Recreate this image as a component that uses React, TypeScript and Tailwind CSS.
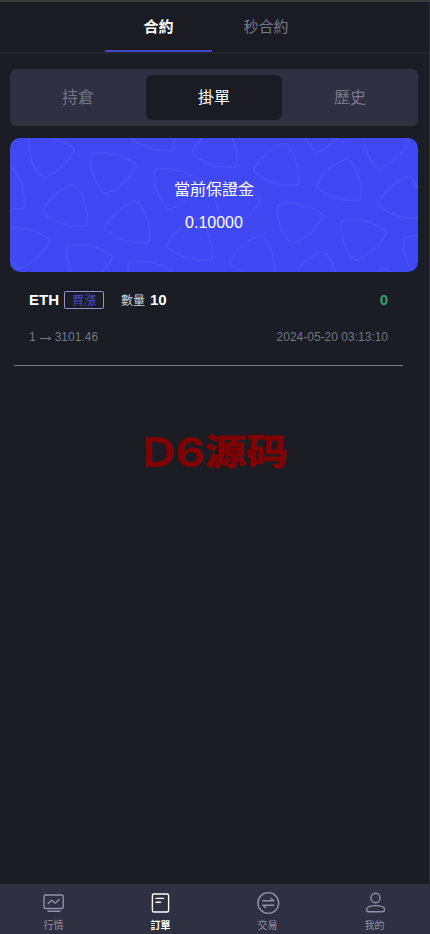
import React from "react";

// Corner positions of the outlined shapes, in thirds of a pixel on the card.
const pointingDown: [number, number][] = [
  [242, 48], [56, 0], [432, 96], [170, 323], [-18, 274], [355, 373],
  [615, 149], [803, 199], [993, 248], [1180, 298], [874, -77], [1061, -27],
];
const pointingUp: [number, number][] = [
  [98, 221], [285, 271], [472, 323], [-90, 169], [358, -6], [547, 44],
  [732, 98], [920, 144], [1105, 198], [660, 373], [847, 423], [1035, 473],
];

function CardPattern() {
  return (
    <svg className="absolute inset-0 h-full w-full" viewBox="0 0 1224 402" preserveAspectRatio="none" fill="none" stroke="#4850f6" strokeWidth="5" strokeLinejoin="round">
      {pointingDown.map(([x, y]) => (
        <path key={`d${x}`} transform={`translate(${x} ${y})`} d="M8-1Q76-12 132 28Q140 34 134 42Q106 92 52 117Q44 121 38 114Q-2 72 0 8Q0 0 8-1Z" />
      ))}
      {pointingUp.map(([x, y]) => (
        <path key={`u${x}`} transform={`translate(${x} ${y})`} d="M1-8Q34-60 86-80Q94-84 100-77Q136-34 134 34Q134 42 126 43Q54 48 3 6Q-3 0 1-8Z" />
      ))}
    </svg>
  );
}

function Watermark() {
  return (
    <svg className="pointer-events-none absolute left-[130px] top-[403px] h-[90px] w-[172px]" viewBox="0 0 172 90" fill="#7d0204">
      <g className="font-['Inter','Liberation_Sans',sans-serif] font-bold" fontSize="41">
        <text x="12" y="62" textLength="33" lengthAdjust="spacingAndGlyphs">D</text>
        <text x="45" y="62" textLength="30" lengthAdjust="spacingAndGlyphs">6</text>
      </g>
      <g className="font-['Noto_Sans_CJK_SC',sans-serif] font-bold" fontSize="36" stroke="#7d0204" strokeWidth="1">
        <text x="75" y="60" textLength="41" lengthAdjust="spacingAndGlyphs">源</text>
        <text x="116" y="60" textLength="42" lengthAdjust="spacingAndGlyphs">码</text>
      </g>
    </svg>
  );
}

const iconProps = { width: 24, height: 24, viewBox: "0 0 24 24", fill: "none", stroke: "currentColor", strokeWidth: 1.4, strokeLinecap: "round" as const, strokeLinejoin: "round" as const };

const tabs = [
  { label: "行情", icon: <svg {...iconProps}><rect x="2" y="4" width="19.2" height="13.5" rx="1.5" /><path d="M6.2 12.4l2.6-2.6q.8-.8 1.7 0l1.8 1.8q.9.9 1.8 0l3.2-3.1M6 20.2h12" /></svg> },
  { label: "訂單", icon: <svg {...iconProps}><rect x="3.4" y="3" width="16.2" height="18" rx="1.5" /><path d="M7 7.4h7.5M7 11.3h4.6" /></svg>, active: true },
  { label: "交易", icon: <svg {...iconProps}><circle cx="12.3" cy="12" r="10.4" /><path d="M6.8 9.8h11l-2.8-2.3M17.8 14.2h-11l2.8 2.3" /></svg> },
  { label: "我的", icon: <svg {...iconProps}><ellipse cx="12.5" cy="7" rx="4.6" ry="4.7" /><path d="M3.5 18.5c0-2.7 4-3.9 9-3.9s9 1.2 9 3.9c0 1.7-.8 2.3-2.4 2.3H5.9c-1.6 0-2.4-.6-2.4-2.3Z" /></svg> },
];

export default function App() {
  return (
    <div className="relative flex h-[934px] w-[430px] flex-col overflow-hidden border-r border-t-2 border-r-[#302e36] border-t-[#393938] bg-[#1a1d23] font-['Liberation_Sans','Noto_Sans_CJK_TC',sans-serif] text-white">
      <header className="flex h-[52px] shrink-0 border-b-2 border-[#24242e] bg-[#1b1b24] pl-[105px] text-[15px]">
        <div className="flex w-[107px] items-center justify-center border-b-2 border-[#4247c5] pt-0.5 font-bold">合約</div>
        <div className="flex w-[107px] items-center justify-center border-b-2 border-transparent pl-px pt-0.5 text-[#77778a]">秒合約</div>
      </header>

      <div className="ml-2.5 mt-[15px] flex h-[57px] w-[408px] shrink-0 rounded-md bg-[#2f3041] py-1.5 text-base text-[#77778a]">
        <div className="flex flex-1 items-center justify-center">持倉</div>
        <div className="flex flex-1 items-center justify-center rounded-md bg-[#1b1b24] text-white">掛單</div>
        <div className="flex flex-1 items-center justify-center">歷史</div>
      </div>

      <section className="relative ml-2.5 mt-3 h-[134px] w-[408px] shrink-0 overflow-hidden rounded-[10px] bg-[#4048f4]">
        <CardPattern />
        <div className="relative pt-[35px] text-center text-base leading-[33px]">
          <div>當前保證金</div>
          <div>0.10000</div>
        </div>
      </section>

      <section className="ml-3.5 flex h-[94px] w-[389px] shrink-0 flex-col border-b border-[#777986] px-[15px] pt-[17px]">
        <div className="flex h-[22px] items-center text-[15px] font-bold">
          <span>ETH</span>
          <span className="ml-[5px] flex h-[18px] w-10 items-center justify-center rounded-[2px] border border-[#9294d0] pt-px text-xs font-normal text-[#484bd4]">買漲</span>
          <span className="ml-[17px] pt-0.5 text-xs font-normal text-[#d2d2d5]">數量</span>
          <span className="ml-[5px]">10</span>
          <span className="ml-auto text-[#2fa56e]">0</span>
        </div>
        <div className="mt-[18px] flex items-center justify-between text-xs leading-4 text-[#737786]">
          <span className="flex items-center">1<svg className="ml-1 mr-[3px]" width="12" height="8" viewBox="0 0 12 8" fill="none" stroke="currentColor"><path d="M0 5.5h11M8.5 3.5l2.5 2-2.5 1.5" /></svg>3101.46</span>
          <span>2024-05-20 03:13:10</span>
        </div>
      </section>

      <Watermark />

      <nav className="mt-auto flex h-[50px] shrink-0 bg-[#2f3041] pr-px text-[10px] text-[#9092ad]">
        {tabs.map(({ label, icon, active }) => (
          <div key={label} className={active ? "flex flex-1 flex-col items-center pt-[7px] text-white" : "flex flex-1 flex-col items-center pt-[7px]"}>
            {icon}
            <span className={active ? "mt-[3px] font-bold leading-[15px]" : "mt-[3px] leading-[15px]"}>{label}</span>
          </div>
        ))}
      </nav>
    </div>
  );
}
